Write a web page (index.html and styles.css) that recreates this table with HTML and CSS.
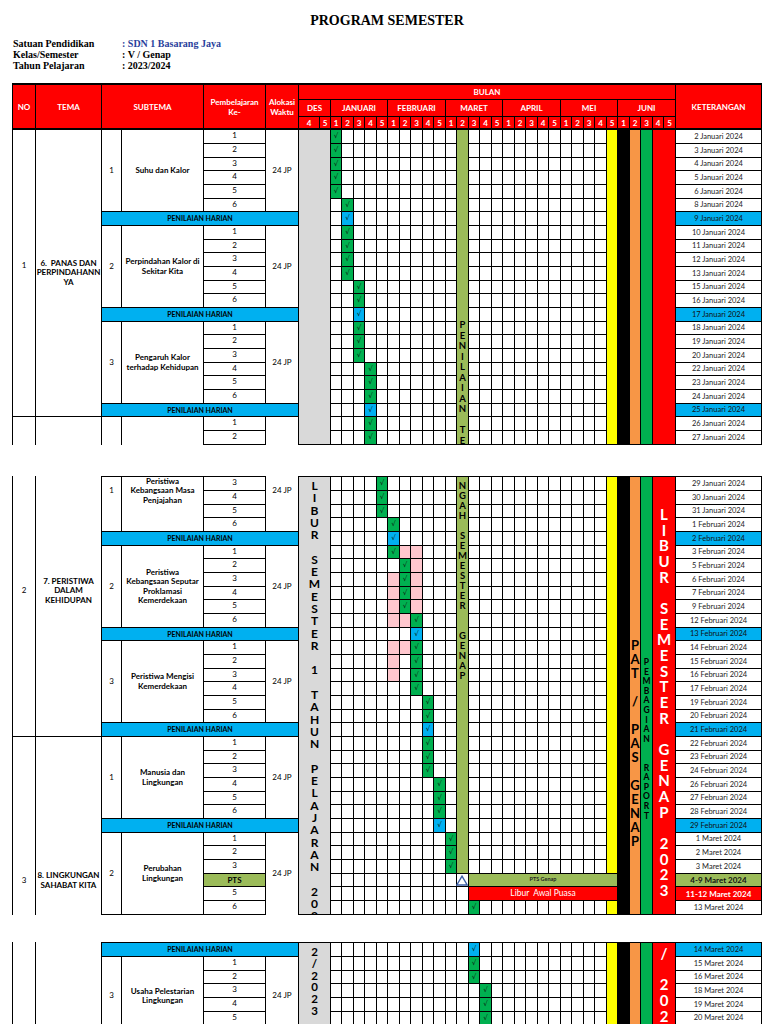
FILE: index.html
```html
<!DOCTYPE html>
<html lang="id">
<head>
<meta charset="utf-8">
<title>Program Semester</title>
<link rel="stylesheet" href="styles.css">
</head>
<body>
<div class="page">
  <h1 class="title">PROGRAM SEMESTER</h1>
  <div class="info">
    <div>Satuan Pendidikan</div><div class="blue">: SDN 1 Basarang Jaya</div>
    <div>Kelas/Semester</div><div>: V / Genap</div>
    <div>Tahun Pelajaran</div><div>: 2023/2024</div>
  </div>

  <div class="sheet head">
    <div class="r3">NO</div>
    <div class="r3">TEMA</div>
    <div class="r3 s2">SUBTEMA</div>
    <div class="r3">Pembelajaran<br>Ke-</div>
    <div class="r3">Alokasi<br>Waktu</div>
    <div class="s32">BULAN</div>
    <div class="r3">KETERANGAN</div>
    <div class="s2">DES</div>
    <div class="s5">JANUARI</div>
    <div class="s5">FEBRUARI</div>
    <div class="s5">MARET</div>
    <div class="s5">APRIL</div>
    <div class="s5">MEI</div>
    <div class="s5">JUNI</div>
    <div>4</div><div>5</div>
    <div>1</div><div>2</div><div>3</div><div>4</div><div>5</div>
    <div>1</div><div>2</div><div>3</div><div>4</div><div>5</div>
    <div>1</div><div>2</div><div>3</div><div>4</div><div>5</div>
    <div>1</div><div>2</div><div>3</div><div>4</div><div>5</div>
    <div>1</div><div>2</div><div>3</div><div>4</div><div>5</div>
    <div>1</div><div>2</div><div>3</div><div>4</div><div>5</div>
  </div>

  <!-- BLOCK 1 -->
  <div class="sheet b1">
    <div class="r21 lbl pb14">1</div>
    <div class="r21 lbl b">6.&nbsp; PANAS DAN<br>PERPINDAHANN<br>YA</div>
    <div class="r6 lbl">1</div>
    <div class="r6 lbl b">Suhu dan Kalor</div>
    <div class="num">1</div>
    <div class="r6 lbl">24 JP</div>
    <div class="s2 r23 grey"></div>
    <div class="g">√</div>
    <div class="e1 s10"></div>
    <div class="r23 olive vt v-ol1">P<br>E<br>N<br>I<br>L<br>A<br>I<br>A<br>N<br><br>T<br>E</div>
    <div class="e0 s12"></div>
    <div class="r23 yel"></div>
    <div class="r23 blk"></div>
    <div class="r23 org"></div>
    <div class="r23 grn"></div>
    <div class="s2 r23 red"></div>
    <div class="ket">2 Januari 2024</div>

    <div class="num">2</div><div class="g">√</div><div class="e1 s10"></div><div class="e0 s12"></div><div class="ket">3 Januari 2024</div>
    <div class="num">3</div><div class="g">√</div><div class="e1 s10"></div><div class="e0 s12"></div><div class="ket">4 Januari 2024</div>
    <div class="num">4</div><div class="g">√</div><div class="e1 s10"></div><div class="e0 s12"></div><div class="ket">5 Januari 2024</div>
    <div class="num">5</div><div class="g">√</div><div class="e1 s10"></div><div class="e0 s12"></div><div class="ket">6 Januari 2024</div>
    <div class="num">6</div><div class="e0"></div><div class="g">√</div><div class="e0 s9"></div><div class="e0 s12"></div><div class="ket">8 Januari 2024</div>

    <div class="s4 ph">PENILAIAN HARIAN</div><div class="e0"></div><div class="bl">√</div><div class="e0 s9"></div><div class="e0 s12"></div><div class="ket kb">9 Januari 2024</div>

    <div class="r6 lbl">2</div>
    <div class="r6 lbl b">Perpindahan Kalor di<br>Sekitar Kita</div>
    <div class="num">1</div>
    <div class="r6 lbl">24 JP</div>
    <div class="e0"></div><div class="g">√</div><div class="e0 s9"></div><div class="e0 s12"></div><div class="ket">10 Januari 2024</div>
    <div class="num">2</div><div class="e0"></div><div class="g">√</div><div class="e0 s9"></div><div class="e0 s12"></div><div class="ket">11 Januari 2024</div>
    <div class="num">3</div><div class="e0"></div><div class="g">√</div><div class="e0 s9"></div><div class="e0 s12"></div><div class="ket">12 Januari 2024</div>
    <div class="num">4</div><div class="e0"></div><div class="g">√</div><div class="e0 s9"></div><div class="e0 s12"></div><div class="ket">13 Januari 2024</div>
    <div class="num">5</div><div class="e0 s2"></div><div class="g">√</div><div class="e1 s8"></div><div class="e0 s12"></div><div class="ket">15 Januari 2024</div>
    <div class="num">6</div><div class="e0 s2"></div><div class="g">√</div><div class="e1 s8"></div><div class="e0 s12"></div><div class="ket">16 Januari 2024</div>

    <div class="s4 ph">PENILAIAN HARIAN</div><div class="e0 s2"></div><div class="bl">√</div><div class="e1 s8"></div><div class="e0 s12"></div><div class="ket kb">17 Januari 2024</div>

    <div class="r6 lbl">3</div>
    <div class="r6 lbl b">Pengaruh Kalor<br>terhadap Kehidupan</div>
    <div class="num">1</div>
    <div class="r6 lbl">24 JP</div>
    <div class="e0 s2"></div><div class="g">√</div><div class="e1 s8"></div><div class="e0 s12"></div><div class="ket">18 Januari 2024</div>
    <div class="num">2</div><div class="e0 s2"></div><div class="g">√</div><div class="e1 s8"></div><div class="e0 s12"></div><div class="ket">19 Januari 2024</div>
    <div class="num">3</div><div class="e0 s2"></div><div class="g">√</div><div class="e1 s8"></div><div class="e0 s12"></div><div class="ket">20 Januari 2024</div>
    <div class="num">4</div><div class="e0 s3"></div><div class="g">√</div><div class="e0 s7"></div><div class="e0 s12"></div><div class="ket">22 Januari 2024</div>
    <div class="num">5</div><div class="e0 s3"></div><div class="g">√</div><div class="e0 s7"></div><div class="e0 s12"></div><div class="ket">23 Januari 2024</div>
    <div class="num">6</div><div class="e0 s3"></div><div class="g">√</div><div class="e0 s7"></div><div class="e0 s12"></div><div class="ket">24 Januari 2024</div>

    <div class="s4 ph">PENILAIAN HARIAN</div><div class="e0 s3"></div><div class="bl">√</div><div class="e0 s7"></div><div class="e0 s12"></div><div class="ket kb">25 Januari 2024</div>

    <div class="r2 nb"></div>
    <div class="r2 nb"></div>
    <div class="r2 nb"></div>
    <div class="r2 nb"></div>
    <div class="num">1</div>
    <div class="r2 nb"></div>
    <div class="e0 s3"></div><div class="g">√</div><div class="e0 s7"></div><div class="e0 s12"></div><div class="ket">26 Januari 2024</div>
    <div class="num">2</div><div class="e0 s3"></div><div class="g">√</div><div class="e0 s7"></div><div class="e0 s12"></div><div class="ket">27 Januari 2024</div>
  </div>

  <!-- BLOCK 2 -->
  <div class="sheet b2">
    <div class="r19 lbl nt pb30">2</div>
    <div class="r19 lbl b nt pb30">7. PERISTIWA<br>DALAM<br>KEHIDUPAN</div>
    <div class="r4 lbl pb26">1</div>
    <div class="r4 lbl b pb26">Peristiwa<br>Kebangsaan Masa<br>Penjajahan</div>
    <div class="num">3</div>
    <div class="r4 lbl nt pb26">24 JP</div>
    <div class="s2 r32 grey vt v-gr2">L<br>I<br>B<br>U<br>R<br><br>S<br>E<br>M<br>E<br>S<br>T<br>E<br>R<br><br>1<br><br>T<br>A<br>H<br>U<br>N<br><br>P<br>E<br>L<br>A<br>J<br>A<br>R<br>A<br>N<br><br>2<br>0<br>2</div>
    <div class="e0 s4"></div><div class="g">√</div><div class="e1 s6"></div>
    <div class="r29 olive vt v-ol2">N<br>G<br>A<br>H<br><br>S<br>E<br>M<br>E<br>S<br>T<br>E<br>R<br><br><br>G<br>E<br>N<br>A<br>P</div>
    <div class="e0 s12"></div>
    <div class="r29 yel"></div>
    <div class="r32 blk"></div>
    <div class="r32 org vt v-or">P<br>A<br>T<br><br>/<br><br>P<br>A<br>S<br><br>G<br>E<br>N<br>A<br>P</div>
    <div class="r32 grn vt v-gn">P<br>E<br>M<br>B<br>A<br>G<br>I<br>A<br>N<br><br><br>R<br>A<br>P<br>O<br>R<br>T</div>
    <div class="s2 r32 red vt v-rd2">L<br>I<br>B<br>U<br>R<br><br>S<br>E<br>M<br>E<br>S<br>T<br>E<br>R<br><br>G<br>E<br>N<br>A<br>P<br><br>2<br>0<br>2<br>3</div>
    <div class="ket">29 Januari 2024</div>

    <div class="num">4</div><div class="e0 s4"></div><div class="g">√</div><div class="e1 s6"></div><div class="e0 s12"></div><div class="ket">30 Januari 2024</div>
    <div class="num">5</div><div class="e0 s4"></div><div class="g">√</div><div class="e1 s6"></div><div class="e0 s12"></div><div class="ket">31 Januari 2024</div>
    <div class="num">6</div><div class="e0 s5"></div><div class="g">√</div><div class="e0 s5"></div><div class="e0 s12"></div><div class="ket">1 Februari 2024</div>

    <div class="s4 ph">PENILAIAN HARIAN</div><div class="e0 s5"></div><div class="bl">√</div><div class="e0 s5"></div><div class="e0 s12"></div><div class="ket kb">2 Februari 2024</div>

    <div class="r6 lbl">2</div>
    <div class="r6 lbl b">Peristiwa<br>Kebangsaan Seputar<br>Proklamasi<br>Kemerdekaan</div>
    <div class="num">1</div>
    <div class="r6 lbl">24 JP</div>
    <div class="e0 s5"></div><div class="g">√</div><div class="pk"></div><div class="pk"></div><div class="e0 s3"></div><div class="e0 s12"></div><div class="ket">3 Februari 2024</div>
    <div class="num">2</div><div class="e0 s6"></div><div class="g">√</div><div class="pk"></div><div class="e0 s3"></div><div class="e0 s12"></div><div class="ket">5 Februari 2024</div>
    <div class="num">3</div><div class="e0 s5"></div><div class="pk"></div><div class="g">√</div><div class="pk"></div><div class="e0 s3"></div><div class="e0 s12"></div><div class="ket">6 Februari 2024</div>
    <div class="num">4</div><div class="e0 s5"></div><div class="pk"></div><div class="g">√</div><div class="pk"></div><div class="e0 s3"></div><div class="e0 s12"></div><div class="ket">7 Februari 2024</div>
    <div class="num">5</div><div class="e0 s5"></div><div class="pk"></div><div class="g">√</div><div class="pk"></div><div class="e0 s3"></div><div class="e0 s12"></div><div class="ket">9 Februari 2024</div>
    <div class="num">6</div><div class="e0 s5"></div><div class="pk"></div><div class="pk"></div><div class="g">√</div><div class="e0 s3"></div><div class="e0 s12"></div><div class="ket">12 Februari 2024</div>

    <div class="s4 ph">PENILAIAN HARIAN</div><div class="e0 s7"></div><div class="bl">√</div><div class="e0 s3"></div><div class="e0 s12"></div><div class="ket kb">13 Februari 2024</div>

    <div class="r6 lbl">3</div>
    <div class="r6 lbl b">Peristiwa Mengisi<br>Kemerdekaan</div>
    <div class="num">1</div>
    <div class="r6 lbl">24 JP</div>
    <div class="e0 s5"></div><div class="pk"></div><div class="pk"></div><div class="g">√</div><div class="e0 s3"></div><div class="e0 s12"></div><div class="ket">14 Februari 2024</div>
    <div class="num">2</div><div class="e0 s5"></div><div class="pk"></div><div class="e0"></div><div class="g">√</div><div class="e0 s3"></div><div class="e0 s12"></div><div class="ket">15 Februari 2024</div>
    <div class="num">3</div><div class="e0 s5"></div><div class="pk"></div><div class="e0"></div><div class="g">√</div><div class="e0 s3"></div><div class="e0 s12"></div><div class="ket">16 Februari 2024</div>
    <div class="num">4</div><div class="e0 s7"></div><div class="g">√</div><div class="e0 s3"></div><div class="e0 s12"></div><div class="ket">17 Februari 2024</div>
    <div class="num">5</div><div class="e0 s8"></div><div class="g">√</div><div class="e1 s2"></div><div class="e0 s12"></div><div class="ket">19 Februari 2024</div>
    <div class="num">6</div><div class="e0 s8"></div><div class="g">√</div><div class="e1 s2"></div><div class="e0 s12"></div><div class="ket">20 Februari 2024</div>

    <div class="s4 ph">PENILAIAN HARIAN</div><div class="e0 s8"></div><div class="bl">√</div><div class="e1 s2"></div><div class="e0 s12"></div><div class="ket kb">21 Februari 2024</div>

    <div class="r13 lbl nb pt109">3</div>
    <div class="r13 lbl b nb pt109">8. LINGKUNGAN<br>SAHABAT KITA</div>
    <div class="r6 lbl">1</div>
    <div class="r6 lbl b">Manusia dan<br>Lingkungan</div>
    <div class="num">1</div>
    <div class="r6 lbl">24 JP</div>
    <div class="e0 s8"></div><div class="g">√</div><div class="e1 s2"></div><div class="e0 s12"></div><div class="ket">22 Februari 2024</div>
    <div class="num">2</div><div class="e0 s8"></div><div class="g">√</div><div class="e1 s2"></div><div class="e0 s12"></div><div class="ket">23 Februari 2024</div>
    <div class="num">3</div><div class="e0 s8"></div><div class="g">√</div><div class="e1 s2"></div><div class="e0 s12"></div><div class="ket">24 Februari 2024</div>
    <div class="num">4</div><div class="e0 s9"></div><div class="g">√</div><div class="e0"></div><div class="e0 s12"></div><div class="ket">26 Februari 2024</div>
    <div class="num">5</div><div class="e0 s9"></div><div class="g">√</div><div class="e0"></div><div class="e0 s12"></div><div class="ket">27 Februari 2024</div>
    <div class="num">6</div><div class="e0 s9"></div><div class="g">√</div><div class="e0"></div><div class="e0 s12"></div><div class="ket">28 Februari 2024</div>

    <div class="s4 ph">PENILAIAN HARIAN</div><div class="e0 s9"></div><div class="bl">√</div><div class="e0"></div><div class="e0 s12"></div><div class="ket kb">29 Februari 2024</div>

    <div class="r6 lbl">2</div>
    <div class="r6 lbl b">Perubahan<br>Lingkungan</div>
    <div class="num">1</div>
    <div class="r6 lbl nb">24 JP</div>
    <div class="e0 s10"></div><div class="g">√</div><div class="e0 s12"></div><div class="ket">1 Maret 2024</div>
    <div class="num">2</div><div class="e0 s10"></div><div class="g">√</div><div class="e0 s12"></div><div class="ket">2 Maret 2024</div>
    <div class="num">3</div><div class="e0 s10"></div><div class="g">√</div><div class="e0 s12"></div><div class="ket">3 Maret 2024</div>
    <div class="num pts">PTS</div><div class="e0 s11"></div>
    <div class="tri"><svg width="12" height="11" viewBox="0 0 12 11"><polygon points="6,1.2 11.2,10 0.8,10" fill="none" stroke="#3c5fa6" stroke-width="1.4"/></svg></div>
    <div class="s13 ptsg">PTS Genap</div><div class="ket kpts">4-9 Maret 2024</div>
    <div class="num">5</div><div class="e0 s12"></div><div class="s13 libur">Libur&nbsp; Awal Puasa</div><div class="ket kred">11-12 Maret 2024</div>
    <div class="num">6</div><div class="e0 s12"></div><div class="g">√</div><div class="e1 s11"></div><div class="yel"></div><div class="ket">13 Maret 2024</div>
  </div>

  <!-- BLOCK 3 -->
  <div class="sheet b3">
    <div class="r6 nt"></div>
    <div class="r6 nt"></div>
    <div class="s4 ph">PENILAIAN HARIAN</div>
    <div class="s2 r6 grey vt v-gr3">2<br>/<br>2<br>0<br>2<br>3</div>
    <div class="e0 s12"></div><div class="bl">√</div><div class="e1 s11"></div>
    <div class="r6 yel"></div>
    <div class="r6 blk"></div>
    <div class="r6 org"></div>
    <div class="r6 grn"></div>
    <div class="s2 r6 red vt v-rd3">/<br><br>2<br>0<br>2</div>
    <div class="ket kb">14 Maret 2024</div>

    <div class="r5 lbl pt11">3</div>
    <div class="r5 lbl b pt11">Usaha Pelestarian<br>Lingkungan</div>
    <div class="num">1</div>
    <div class="r5 lbl pt11">24 JP</div>
    <div class="e0 s12"></div><div class="g">√</div><div class="e1 s11"></div><div class="ket">15 Maret 2024</div>
    <div class="num">2</div><div class="e0 s12"></div><div class="g">√</div><div class="e1 s11"></div><div class="ket">16 Maret 2024</div>
    <div class="num">3</div><div class="e0 s13"></div><div class="g">√</div><div class="e0 s10"></div><div class="ket">18 Maret 2024</div>
    <div class="num">4</div><div class="e0 s13"></div><div class="g">√</div><div class="e0 s10"></div><div class="ket">19 Maret 2024</div>
    <div class="num">5</div><div class="e0 s13"></div><div class="g">√</div><div class="e0 s10"></div><div class="ket">20 Maret 2024</div>
  </div>
</div>
</body>
</html>
```

FILE: styles.css
```css
* { box-sizing: border-box; }

body {
  margin: 0;
  background: #fff;
  color: #000;
  font-family: Lato, "Liberation Sans", sans-serif;
}

.page {
  width: 768px;
  padding-left: 12px;
}

.title {
  margin: 13px 0 0;
  width: 750px;
  text-align: center;
  font: bold 14px/16px "Liberation Serif", serif;
}

.info {
  margin-top: 9px;
  padding-left: 1px;
  display: grid;
  grid-template-columns: 109px auto;
  font: bold 10px/11px "Liberation Serif", serif;
}
.info .blue { color: #2a3f9c; }

/* ---------- spreadsheet grid ---------- */
.sheet {
  display: grid;
  width: 750px;
  padding: 1px;
  gap: 1px;
  background: #000;
  grid-template-columns: 22px 65px 19px 81px 61px 32px 20px 10px repeat(15, 10px 11px) 85px;
}
.sheet > div {
  background: #fff;
  display: flex;
  align-items: center;
  justify-content: center;
  text-align: center;
  font-size: 8px;
  line-height: 1;
  overflow: hidden;
  min-width: 0;
  min-height: 0;
}

.head {
  margin-top: 12px;
  padding-top: 2px;
  padding-bottom: 2px;
  grid-template-rows: 14px 16px 11px;
}
.head > div {
  background: #f00;
  color: #fff;
  font-weight: bold;
  line-height: 10px;
}

.b1 { padding-top: 0; grid-template-rows: repeat(7, 13px 13px 12px) 13px 13px; }
.b2 { margin-top: 31px; grid-template-rows: repeat(10, 13px 13px 12px) 13px 13px; }
.b3 { margin-top: 27px; grid-template-rows: repeat(2, 13px 13px 12px); }

/* spans */
.s2 { grid-column: span 2; }
.s3 { grid-column: span 3; }
.s4 { grid-column: span 4; }
.s5 { grid-column: span 5; }
.s6 { grid-column: span 6; }
.s7 { grid-column: span 7; }
.s8 { grid-column: span 8; }
.s9 { grid-column: span 9; }
.s10 { grid-column: span 10; }
.s11 { grid-column: span 11; }
.s12 { grid-column: span 12; }
.s13 { grid-column: span 13; }
.s32 { grid-column: span 32; }
.r2 { grid-row: span 2; }
.r3 { grid-row: span 3; }
.r4 { grid-row: span 4; }
.r5 { grid-row: span 5; }
.r6 { grid-row: span 6; }
.r13 { grid-row: span 13; }
.r19 { grid-row: span 19; }
.r21 { grid-row: span 21; }
.r23 { grid-row: span 23; }
.r29 { grid-row: span 29; }
.r32 { grid-row: span 32; }

/* continuation across page breaks */
.sheet .nt { margin-top: -1px; }
.sheet .nb { margin-bottom: -1px; }

/* labels */
.sheet .lbl { line-height: 9.3px; }
.sheet .b { font-weight: bold; }
.sheet .pb14 { padding-bottom: 14px; }
.sheet .pb26 { padding-bottom: 26px; }
.sheet .pb30 { padding-bottom: 30px; }
.sheet .pt109 { padding-top: 109px; }
.sheet .pt11 { padding-top: 11px; }

.sheet .num { padding-bottom: 3px; }
.sheet .ket { font-size: 7.5px; color: #222; }
.sheet .kb { background: #00b0f0; color: #111; }
.sheet .kpts { background: #9bbb59; color: #111; font-weight: bold; font-size: 8px; }
.sheet .kred { background: #f00; color: #fff; font-weight: bold; font-size: 8px; }
.sheet .ph { background: #00b0f0; font-weight: bold; font-size: 7px; }
.sheet .pts { background: #9bbb59; font-weight: bold; padding-bottom: 0; }

/* empty week cells with vertical grid lines */
.sheet .e0 { background: repeating-linear-gradient(90deg, #fff 0 10px, #000 10px 11px, #fff 11px 22px, #000 22px 23px); }
.sheet .e1 { background: repeating-linear-gradient(90deg, #fff 0 11px, #000 11px 12px, #fff 12px 22px, #000 22px 23px); }

/* marks */
.sheet .g, .sheet .bl {
  font-family: "DejaVu Sans", sans-serif;
  font-size: 7px;
  color: #0d2a14;
}
.sheet .g { background: #00b050; }
.sheet .bl { background: #00b0f0; }
.sheet .pk { background: #ffc7ce; }

.sheet .tri { overflow: visible; }
.tri svg { display: block; margin-left: -1px; }

.sheet .ptsg { background: #9bbb59; font-size: 5.5px; font-weight: bold; color: #222; }
.sheet .libur { background: #f00; color: #fff; font-size: 8.5px; }

/* merged coloured columns */
.sheet .grey { background: #d9d9d9; }
.sheet .olive { background: #9bbb59; }
.sheet .yel { background: #ff0; }
.sheet .blk { background: #000; }
.sheet .org { background: #f79646; }
.sheet .grn { background: #00b050; }
.sheet .red { background: #f00; }

/* vertical stacked letters */
.sheet .vt { display: block; font-weight: bold; text-align: center; }
.sheet .v-ol1 { font-size: 9.5px; line-height: 10.5px; padding-top: 190px; }
.sheet .v-ol2 { font-size: 9.5px; line-height: 10px; padding-top: 4px; }
.sheet .v-gr2 { font-size: 12px; line-height: 12.3px; padding-top: 3px; }
.sheet .v-gr3 { font-size: 11.5px; line-height: 11.8px; padding-top: 3px; }
.sheet .v-rd2 { font-size: 15px; line-height: 15.67px; padding-top: 30px; color: #fff; }
.sheet .v-rd3 { font-size: 15px; line-height: 15.67px; padding-top: 3px; color: #fff; }
.sheet .v-or { font-size: 13px; line-height: 14px; padding-top: 161px; }
.sheet .v-gn { font-size: 8.5px; line-height: 9.6px; padding-top: 181px; }
```
